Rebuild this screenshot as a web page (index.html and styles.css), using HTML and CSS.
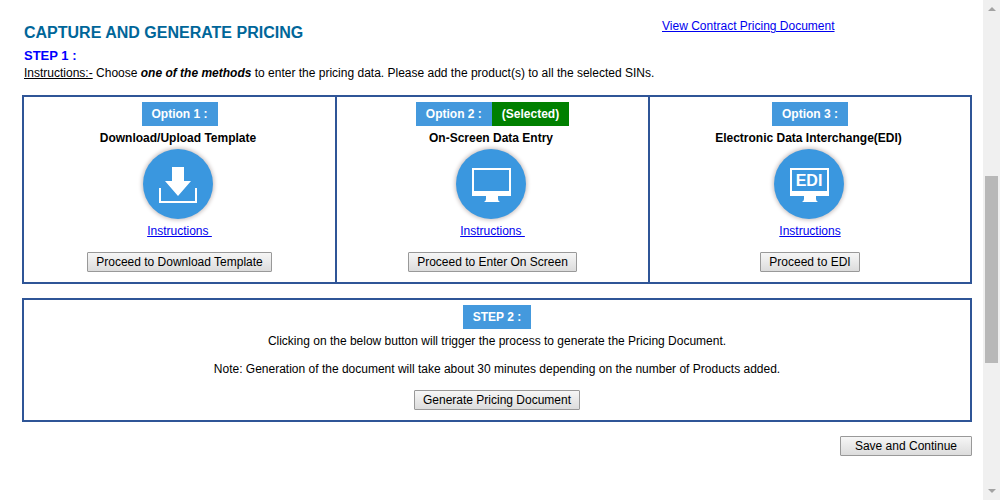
FILE: index.html
```html
<!DOCTYPE html>
<html lang="en">
<head>
<meta charset="utf-8">
<title>Capture and Generate Pricing</title>
<link rel="stylesheet" href="styles.css">
</head>
<body>
<div class="window">
  <main class="page">
    <header class="head">
      <h1 class="title">CAPTURE AND GENERATE PRICING</h1>
      <a class="doc-link" href="#">View Contract Pricing Document</a>
    </header>
    <h2 class="step">STEP 1 :</h2>
    <p class="intro"><u>Instructions:-</u> Choose <b><i>one of the methods</i></b> to enter the pricing data. Please add the product(s) to all the selected SINs.</p>

    <section class="options">
      <article class="option">
        <div class="tags"><span class="tag">Option 1 :</span></div>
        <h3 class="name">Download/Upload Template</h3>
        <svg class="icon" viewBox="0 0 70 70" aria-hidden="true">
          <path fill="#fff" d="M29 18h12v14h7L35 47 22 32h7zM16 39h2v13h34V39h2v15H16z"/>
        </svg>
        <a class="help" href="#">Instructions&nbsp;</a>
        <button class="btn" type="button">Proceed to Download Template</button>
      </article>
      <article class="option">
        <div class="tags"><span class="tag">Option 2 :</span><span class="tag tag-selected">(Selected)</span></div>
        <h3 class="name">On-Screen Data Entry</h3>
        <svg class="icon" viewBox="0 0 70 70" aria-hidden="true">
          <path fill="#fff" fill-rule="evenodd" d="M16 19h39v28H42v3q0 2 2 3H28q2-1 2-3v-3H16zM18 21v21h35V21z"/>
        </svg>
        <a class="help" href="#">Instructions&nbsp;</a>
        <button class="btn" type="button">Proceed to Enter On Screen</button>
      </article>
      <article class="option">
        <div class="tags"><span class="tag">Option 3 :</span></div>
        <h3 class="name">Electronic Data Interchange(EDI)</h3>
        <svg class="icon" viewBox="0 0 70 70" aria-hidden="true">
          <path fill="#fff" fill-rule="evenodd" d="M16 19h39v28H42v3q0 2 2 3H28q2-1 2-3v-3H16zM18 21v21h35V21z"/>
          <text class="icon-text" x="35" y="37" text-anchor="middle">EDI</text>
        </svg>
        <a class="help" href="#">Instructions</a>
        <button class="btn" type="button">Proceed to EDI</button>
      </article>
    </section>

    <section class="generate">
      <h2 class="tag">STEP 2 :</h2>
      <p class="line">Clicking on the below button will trigger the process to generate the Pricing Document.</p>
      <p class="line">Note: Generation of the document will take about 30 minutes depending on the number of Products added.</p>
      <button class="btn" type="button">Generate Pricing Document</button>
    </section>

    <div class="actions"><button class="btn btn-wide" type="button">Save and Continue</button></div>
  </main>
  <div class="scrollbar" aria-hidden="true">
    <svg class="arrow" viewBox="0 0 17 17"><path fill="#a3a3a3" d="M5 11l4-4 4 4z"/></svg>
    <div class="track"><div class="thumb"></div></div>
    <svg class="arrow" viewBox="0 0 17 17"><path fill="#a3a3a3" d="M5 6l4 4 4-4z"/></svg>
  </div>
</div>
</body>
</html>
```
FILE: styles.css
```css
* { box-sizing: border-box; }
body {
  margin: 0;
  background: #fff;
  color: #000;
  font-family: "Liberation Sans", Arial, sans-serif;
  font-size: 12px;
  line-height: 14px;
}
h1, h2, h3, p { margin: 0; }
a { color: #0000ee; }

.window { display: flex; min-height: 100vh; }
.page { flex: 1; padding: 19px 11px 16px 22px; }

.head {
  display: grid;
  grid-template-columns: 638fr 310fr;
  padding-left: 2px;
}
.title { padding-top: 4px; font-size: 16px; line-height: 20px; color: #006699; }
.doc-link { justify-self: start; }
.step {
  padding: 4px 2px 0;
  font-size: 13px;
  line-height: 18px;
  color: #0000ff;
  font-weight: bold;
}
.intro { padding: 1px 2px 0; }

.options {
  display: grid;
  grid-template-columns: 311fr 313fr 322fr;
  margin-top: 15px;
  border: 2px solid #2f5597;
}
.option {
  display: flex;
  flex-direction: column;
  align-items: center;
  padding: 5px 0 10px;
}
.option + .option { border-left: 2px solid #2f5597; }
.tags { display: flex; }
.tag {
  padding: 5px 10px;
  background: #4499dd;
  color: #fff;
  font-size: 12px;
  line-height: 14px;
  font-weight: bold;
}
.tag-selected { background: #008000; }
.name { margin: 5px 3px 0 0; font-size: 12px; line-height: 14px; }
.icon {
  width: 70px;
  height: 70px;
  margin: 4px 3px 5px 0;
  border-radius: 50%;
  background: #3a97df;
  box-shadow: 0 0 4px 1px #c4bcbc;
}
.icon-text { fill: #fff; font-size: 16px; font-weight: bold; }
.help { margin-bottom: 14px; }

.btn {
  height: 20px;
  padding: 0 8px;
  border: 1px solid #999;
  border-radius: 1px;
  background: linear-gradient(#f6f6f6, #dcdcdc);
  color: #000;
  font: inherit;
}
.btn-wide { padding: 0 14px; }

.generate {
  display: flex;
  flex-direction: column;
  align-items: center;
  margin-top: 14px;
  padding: 5px 0 10px;
  border: 2px solid #2f5597;
}
.line { margin: 5px 0 9px; }
.generate .btn { margin-top: 5px; }
.actions { display: flex; justify-content: flex-end; margin-top: 14px; }

.scrollbar {
  display: flex;
  flex-direction: column;
  width: 17px;
  background: #f0f0f0;
}
.arrow { width: 17px; height: 17px; }
.track {
  flex: 1;
  display: grid;
  grid-template-rows: 159fr 187fr 120fr;
  padding: 0 2px;
}
.thumb { grid-row: 2; background: #b8b8b8; }
```
